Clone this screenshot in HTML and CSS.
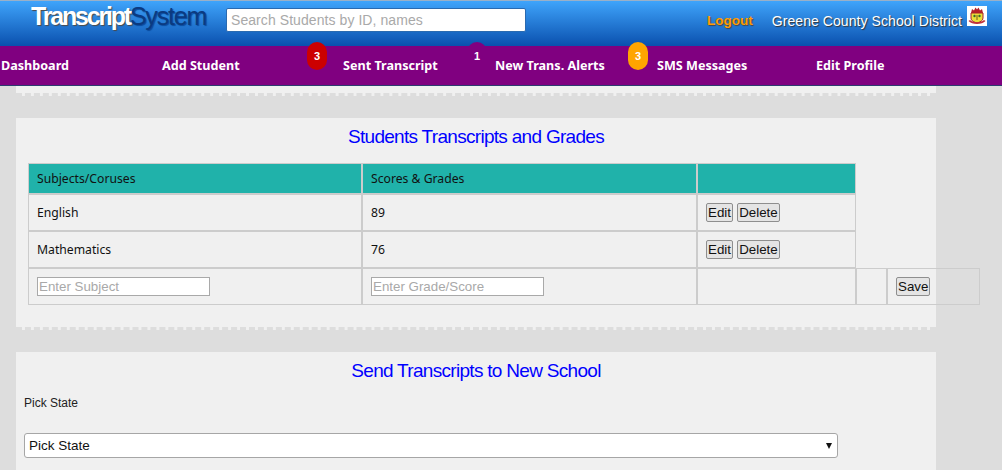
FILE: index.html
```html
<!DOCTYPE html>
<html lang="en">
<head>
    <meta charset="UTF-8">
    <title>Transcript System</title>
    <link rel="stylesheet" href="styles.css">
</head>
<body>
    <div class="header">
        <div class="logo">Transcript<span>System</span></div>
        <input class="search" type="text" placeholder="Search Students by ID, names">
        <a class="logout" href="#">Logout</a>
        <div class="district">Greene County School District</div>
        <svg class="crest" width="20" height="20" viewBox="0 0 20 20">
            <rect width="20" height="20" fill="#fff"/>
            <path d="M4 7 L5 3 L7 4.5 L8.5 1.5 L10 3.5 L11.5 1.5 L13 4.5 L15 3 L16 7 Z" fill="#b5202a"/>
            <path d="M4 7 H16 V12 C16 15 13 16 10 17 C7 16 4 15 4 12 Z" fill="#e8e03a" stroke="#a8202a" stroke-width="1"/>
            <circle cx="7.5" cy="10" r="1.2" fill="#3c6b2a"/>
            <circle cx="12.5" cy="10" r="1.2" fill="#3c6b2a"/>
            <path d="M10 9 V14" stroke="#7a5a20" stroke-width="1"/>
            <path d="M1.5 15 C5 19 15 19 18.5 15 L17 14 C14 17 6 17 3 14 Z" fill="#c0303a"/>
        </svg>
    </div>

    <ul class="nav">
        <li class="nav-dashboard">Dashboard</li>
        <li class="nav-add">Add Student</li>
        <li class="nav-sent"><span class="badge badge-red">3</span>Sent Transcript</li>
        <li class="nav-alerts"><span class="badge badge-purple">1</span>New Trans. Alerts</li>
        <li class="nav-sms"><span class="badge badge-orange">3</span>SMS Messages</li>
        <li class="nav-edit">Edit Profile</li>
    </ul>

    <div class="panel panel-stub"></div>

    <div class="panel panel-grades">
        <h2>Students Transcripts and Grades</h2>
        <table class="grades">
            <colgroup>
                <col class="col-subject">
                <col class="col-score">
                <col class="col-action">
                <col class="col-gap">
                <col class="col-save">
            </colgroup>
            <tr class="head">
                <td>Subjects/Coruses</td>
                <td>Scores &amp; Grades</td>
                <td></td>
            </tr>
            <tr>
                <td>English</td>
                <td>89</td>
                <td><button>Edit</button> <button>Delete</button></td>
            </tr>
            <tr>
                <td>Mathematics</td>
                <td>76</td>
                <td><button>Edit</button> <button>Delete</button></td>
            </tr>
            <tr>
                <td><input class="cell-input" type="text" placeholder="Enter Subject"></td>
                <td><input class="cell-input" type="text" placeholder="Enter Grade/Score"></td>
                <td></td>
                <td></td>
                <td><button>Save</button></td>
            </tr>
        </table>
    </div>

    <div class="panel panel-send">
        <h2>Send Transcripts to New School</h2>
        <p class="label">Pick State</p>
        <div class="state-wrap">
            <select class="state">
                <option>Pick State</option>
            </select>
        </div>
    </div>
</body>
</html>
```

FILE: styles.css
```css
* {
    box-sizing: border-box;
}

html, body {
    margin: 0;
    padding: 0;
    height: 100vh;
    overflow: hidden;
}

body {
    background: #dddddd;
    font-family: "Liberation Sans", Arial, sans-serif;
}

/* top bar */
.header {
    display: flex;
    align-items: flex-start;
    height: 46px;
    border-top: 1px solid #9ab0c8;
    background: linear-gradient(#3fa4fb, #0a50ae);
}

.logo {
    width: 226px;
    padding: 1px 0 0 31px;
    font-size: 25px;
    font-weight: bold;
    letter-spacing: -2.2px;
    color: #fff;
    white-space: nowrap;
    text-shadow: 1px 1px 1px #4a4a4a;
}

.logo span {
    color: #0b3a80;
    font-weight: normal;
    letter-spacing: -1.2px;
    text-shadow: 1px 1px 1px #0a4a9c;
}

.search {
    width: 300px;
    height: 24px;
    margin-top: 7px;
    padding: 0 4px;
    border: 1px solid #2a6ab0;
    border-radius: 2px;
    background: #fff;
    font-family: inherit;
    font-size: 14px;
    letter-spacing: 0.07px;
}

.search::placeholder,
.cell-input::placeholder {
    color: #a9a9a9;
    opacity: 1;
}

.logout {
    margin: 12px 0 0 181px;
    color: #ff9c00;
    font-size: 13.5px;
    font-weight: bold;
    text-decoration: none;
    text-shadow: 1px 1px 1px #444;
}

.district {
    margin: 12px 0 0 19px;
    color: #fff;
    font-size: 14px;
    letter-spacing: 0.07px;
    white-space: nowrap;
    text-shadow: 1px 1px 1px #333;
}

.crest {
    margin: 5px 0 0 5px;
    flex: none;
}

/* purple menu */
.nav {
    display: flex;
    align-items: center;
    height: 40px;
    margin: 0;
    padding: 0 0 0 1px;
    list-style: none;
    background: #800080;
    border-bottom: 1px solid #2c3c70;
    color: #fff;
    font-family: "Noto Sans", sans-serif;
    font-size: 12.6px;
    font-weight: bold;
}

.nav li {
    position: relative;
    white-space: nowrap;
}

.nav-dashboard { width: 161px; }
.nav-add { width: 181px; }
.nav-sent { width: 152px; }
.nav-alerts { width: 162px; }
.nav-sms { width: 159px; }

.badge {
    position: absolute;
    top: -15px;
    left: -36px;
    width: 20px;
    height: 28px;
    border-radius: 10px;
    color: #fff;
    font-family: "Liberation Sans", Arial, sans-serif;
    font-size: 11px;
    line-height: 28px;
    text-align: center;
}

.badge-red { background: #cc0000; }
.badge-purple { background: #800080; left: -28px; }
.badge-orange { background: #ffa500; left: -29px; }

/* content panels */
.panel {
    width: 920px;
    margin-left: 16px;
    background: #f0f0f0;
    border-bottom: 3px dashed #dddddd;
}

.panel h2 {
    margin: 0;
    color: #0000ff;
    font-size: 19px;
    font-weight: normal;
    letter-spacing: -0.7px;
    text-align: center;
}

.panel-stub {
    height: 10px;
    margin-bottom: 22px;
}

.panel-grades {
    height: 212px;
    padding-top: 8px;
    margin-bottom: 22px;
}

.grades {
    width: 952px;
    margin: 15px 0 0 12px;
    table-layout: fixed;
    border-collapse: separate;
    border-spacing: 0;
    font-family: "Noto Sans", sans-serif;
    font-size: 12.2px;
    color: #111;
}

.col-subject { width: 334px; }
.col-score { width: 335px; }
.col-action { width: 159px; }
.col-gap { width: 31px; }
.col-save { width: 93px; }

.grades td {
    height: 37px;
    padding: 0 8px;
    border: 1px solid #cccccc;
    white-space: nowrap;
}

.grades .head td {
    height: 31px;
    background: #20b2aa;
}

.cell-input {
    width: 173px;
    height: 19px;
    padding: 0 1px;
    border: 1px solid #a9a9a9;
    background: #fff;
    font-family: "Liberation Sans", Arial, sans-serif;
    font-size: 13.33px;
}

.grades button {
    height: 19px;
    padding: 0 1px;
    border: 1px solid #8e8e8e;
    border-radius: 2px;
    background: #e4e4e4;
    color: #111;
    font-family: "Liberation Sans", Arial, sans-serif;
    font-size: 13.33px;
}

.grades button + button {
    margin-left: 1px;
}

.panel-send {
    height: 130px;
    padding: 8px 8px 0;
}

.label {
    margin: 14px 0 0;
    color: #222;
    font-size: 12px;
}

.state-wrap {
    position: relative;
    width: 814px;
    margin-top: 23px;
}

/* black arrow of the select */
.state-wrap::after {
    content: "";
    position: absolute;
    top: 10px;
    right: 6px;
    border-top: 6px solid #111;
    border-left: 3.5px solid transparent;
    border-right: 3.5px solid transparent;
}

.state {
    display: block;
    width: 100%;
    height: 25px;
    padding-left: 4px;
    border: 1px solid #a6a6a6;
    border-radius: 3px;
    background: #fff;
    color: #111;
    font-family: "Liberation Sans", Arial, sans-serif;
    font-size: 13.5px;
    appearance: none;
}
```
